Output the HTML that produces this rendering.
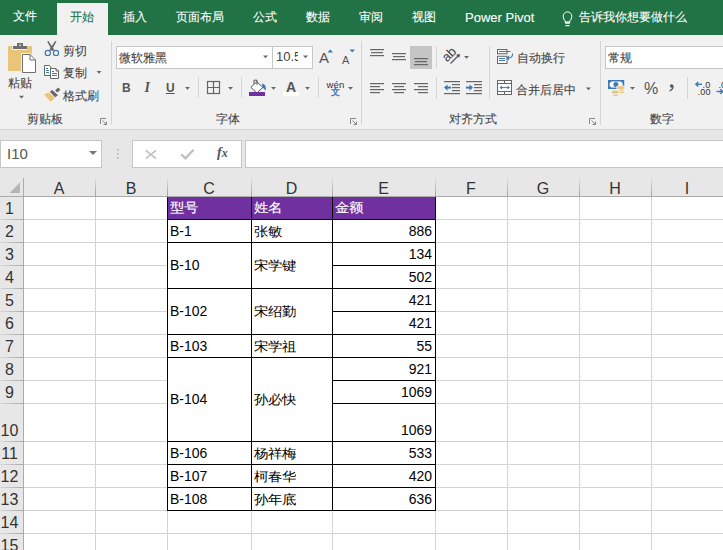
<!DOCTYPE html><html><head><meta charset="utf-8"><style>
*{box-sizing:border-box;margin:0;padding:0}
html,body{width:723px;height:550px;overflow:hidden;background:#e7e7e7}
body{position:relative;font-family:"Liberation Sans",sans-serif;color:#444}
div{position:absolute;white-space:nowrap}
.tab{top:10px;font-size:12px;line-height:15px;color:#fff;-webkit-text-stroke:0.1px currentColor}
.t{font-size:12px;line-height:15px;color:#444;-webkit-text-stroke:0.1px #444}
.sep{width:1px;background:#d5d5d5}
.box{background:#fff;border:1px solid #c6c6c6}
.dd{width:0;height:0;border-left:3px solid transparent;border-right:3px solid transparent;border-top:3px solid #666}
.gl{background:#d4d4d4}
.bk{background:#000}
.ch{top:181px;height:19px;font-size:16px;line-height:19px;text-align:center;color:#333}
.rh{left:-4px;width:27px;font-size:16px;text-align:center;color:#333}
.c{font-size:14px;line-height:16px;color:#000}
svg{position:absolute;overflow:visible}
</style></head><body>
<div style="left:0px;top:0px;width:723px;height:35px;background:#217346"></div>
<div style="left:57px;top:3px;width:51px;height:33px;background:#f1f1f1"></div>
<div class="tab" style="left:13px;top:9px;">文件</div>
<div class="tab" style="left:70px;top:10px;color:#217346">开始</div>
<div class="tab" style="left:123px;top:10px;">插入</div>
<div class="tab" style="left:176px;top:10px;">页面布局</div>
<div class="tab" style="left:253px;top:10px;">公式</div>
<div class="tab" style="left:306px;top:10px;">数据</div>
<div class="tab" style="left:359px;top:10px;">审阅</div>
<div class="tab" style="left:412px;top:10px;">视图</div>
<div class="tab" style="left:465px;top:10px;font-size:13px">Power Pivot</div>
<div class="tab" style="left:579px;top:10px;">告诉我你想要做什么</div>
<div style="left:0px;top:35px;width:723px;height:94px;background:#f1f1f1"></div>
<div style="left:0px;top:129px;width:723px;height:1px;background:#d5d5d5"></div>
<svg width="723" height="550" style="left:0;top:0;z-index:5"><rect x="111" y="41" width="1" height="84" fill="#d5d5d5"/><rect x="361" y="41" width="1" height="84" fill="#d5d5d5"/><rect x="600" y="41" width="1" height="84" fill="#d5d5d5"/><rect x="198" y="77" width="1" height="21" fill="#d5d5d5"/><rect x="241" y="77" width="1" height="21" fill="#d5d5d5"/><rect x="318" y="77" width="1" height="21" fill="#d5d5d5"/><rect x="436" y="46" width="1" height="22" fill="#d5d5d5"/><rect x="436" y="77" width="1" height="22" fill="#d5d5d5"/><rect x="489" y="46" width="1" height="53" fill="#d5d5d5"/><rect x="687" y="77" width="1" height="22" fill="#d5d5d5"/><rect x="8" y="46" width="24" height="25" rx="1" fill="#e9c57a"/><rect x="12" y="46" width="15" height="4" fill="#f1f1f1"/><rect x="13" y="46" width="14" height="3" fill="#6d6d6d"/><rect x="17" y="43" width="6" height="4" fill="#6d6d6d"/><rect x="19.5" y="44.5" width="1.5" height="1.5" fill="#f1f1f1"/><path d="M21 53 H30.5 L37 59.5 V73 H21 Z" fill="#f1f1f1"/><path d="M22.5 54.5 H30 L35.5 60 V72.5 H22.5 Z" fill="#fff" stroke="#6f6f6f" stroke-width="1"/><path d="M30 54.5 V60 H35.5" fill="none" stroke="#6f6f6f" stroke-width="1"/><polygon points="47.2,41.6 48.5,41.1 54.4,50.1 52.3,50.9" fill="#666"/><polygon points="56.4,41.6 55.1,41.1 49.2,50.1 51.3,50.9" fill="#666"/><circle cx="47.8" cy="52.9" r="2.6" fill="none" stroke="#3c78b4" stroke-width="1.15"/><circle cx="56" cy="52.9" r="2.6" fill="none" stroke="#3c78b4" stroke-width="1.15"/><path d="M44.5 65.5 H49.5 L51 67 V68.5 H50.5 V75.5 H44.5 Z" fill="#fff" stroke="#666" stroke-width="1"/><path d="M50.5 68.5 H56 L58.5 71 V78.5 H50.5 Z" fill="#fff" stroke="#666" stroke-width="1"/><path d="M56 68.5 V71 H58.5" fill="none" stroke="#666" stroke-width="1"/><rect x="46" y="68.0" width="2" height="1" fill="#3c78b4"/><rect x="46" y="70.0" width="3" height="1" fill="#3c78b4"/><rect x="46" y="72.0" width="3" height="1" fill="#3c78b4"/><rect x="52" y="71.0" width="2" height="1" fill="#3c78b4"/><rect x="52" y="73.0" width="5" height="1" fill="#3c78b4"/><rect x="52" y="75.0" width="5" height="1" fill="#3c78b4"/><polygon points="55.2,90.4 58.2,87.6 60.4,89.8 57.4,92.6" fill="#666"/><polygon points="52.2,90.1 49.8,91.8 55.2,97.2 58,95.2" fill="#666"/><polygon points="44,94.6 48.6,92.6 55,97.8 50.8,101.8" fill="#e9c57a"/><polygon points="19,95.8 24,95.8 21.5,98.6" fill="#666"/><polygon points="96.5,71 101.5,71 99.0,73.8" fill="#666"/><polygon points="263,55.5 268,55.5 265.5,58.3" fill="#666"/><polygon points="303,55.5 308,55.5 305.5,58.3" fill="#666"/><polygon points="185,87 190,87 187.5,89.8" fill="#666"/><polygon points="228,87 233,87 230.5,89.8" fill="#666"/><polygon points="271,87 276,87 273.5,89.8" fill="#666"/><polygon points="305,87 310,87 307.5,89.8" fill="#666"/><polygon points="348,87 353,87 350.5,89.8" fill="#666"/><polygon points="464,56 469,56 466.5,58.8" fill="#666"/><polygon points="586,87.5 591,87.5 588.5,90.3" fill="#666"/><polygon points="630,87 635,87 632.5,89.8" fill="#666"/><polygon points="327.5,52.5 333,52.5 330.25,49.5" fill="#3c78b4"/><polygon points="349.5,49.5 355,49.5 352.25,52.5" fill="#3c78b4"/><path d="M256.8 81.7 L262.9 87.4 L256.8 93 L250.9 87.4 Z" fill="#fff" stroke="#555" stroke-width="1"/><path d="M254 84 V80.2 H257 V85" fill="none" stroke="#555" stroke-width="1"/><path d="M262 83.6 Q266.8 84.6 265.6 90.8 Q264.2 89.2 262.6 87.6 Z" fill="#3c78b4"/><rect x="249" y="92" width="16" height="4" fill="#7030a0"/><rect x="283" y="92" width="16" height="4" fill="#fff"/><rect x="207.5" y="81.5" width="12" height="12" fill="none" stroke="#666" stroke-width="1.2"/><path d="M213.5 81.5 V93.5 M207.5 87.5 H219.5" stroke="#666" stroke-width="1.2"/><rect x="410" y="46" width="22" height="23" fill="#c5c5c5"/><rect x="370" y="49" width="14" height="1.2" fill="#666"/><rect x="370" y="55" width="14" height="1.2" fill="#666"/><rect x="392" y="53" width="14" height="1.2" fill="#666"/><rect x="392" y="59" width="14" height="1.2" fill="#666"/><rect x="414" y="58" width="14" height="1.2" fill="#666"/><rect x="414" y="64" width="14" height="1.2" fill="#666"/><rect x="371" y="52" width="12" height="1.2" fill="#666"/><rect x="393" y="56" width="12" height="1.2" fill="#666"/><rect x="415" y="61" width="12" height="1.2" fill="#666"/><rect x="370" y="83" width="14" height="1.2" fill="#666"/><rect x="392" y="83" width="14" height="1.2" fill="#666"/><rect x="414" y="83" width="14" height="1.2" fill="#666"/><rect x="370" y="86" width="10" height="1.2" fill="#666"/><rect x="394" y="86" width="10" height="1.2" fill="#666"/><rect x="418" y="86" width="10" height="1.2" fill="#666"/><rect x="370" y="89" width="14" height="1.2" fill="#666"/><rect x="392" y="89" width="14" height="1.2" fill="#666"/><rect x="414" y="89" width="14" height="1.2" fill="#666"/><rect x="370" y="92" width="10" height="1.2" fill="#666"/><rect x="394" y="92" width="10" height="1.2" fill="#666"/><rect x="418" y="92" width="10" height="1.2" fill="#666"/><text x="0" y="0" transform="translate(452 57.5) rotate(-45)" font-family="Liberation Sans" font-size="13" fill="#444" text-anchor="middle">ab</text><path d="M450.5 63.5 L459 55" stroke="#555" stroke-width="1.2"/><polygon points="460,54 456,54.8 459.2,58" fill="#555"/><rect x="444" y="81" width="16" height="1.2" fill="#666"/><rect x="444" y="93" width="16" height="1.2" fill="#666"/><rect x="452" y="84" width="8" height="1.2" fill="#666"/><rect x="452" y="87" width="8" height="1.2" fill="#666"/><rect x="452" y="90" width="8" height="1.2" fill="#666"/><path d="M451 87.6 H445.5" stroke="#3c78b4" stroke-width="2"/><polygon points="444,87.6 447.5,84.5 447.5,90.7" fill="#3c78b4"/><rect x="466" y="81" width="16" height="1.2" fill="#666"/><rect x="466" y="93" width="16" height="1.2" fill="#666"/><rect x="474" y="84" width="8" height="1.2" fill="#666"/><rect x="474" y="87" width="8" height="1.2" fill="#666"/><rect x="474" y="90" width="8" height="1.2" fill="#666"/><path d="M466 87.6 H471.5" stroke="#3c78b4" stroke-width="2"/><polygon points="473,87.6 469.5,84.5 469.5,90.7" fill="#3c78b4"/><rect x="497.5" y="49.5" width="9.5" height="4.2" fill="#fff" stroke="#666" stroke-width="1"/><rect x="497.5" y="56.3" width="9.5" height="7.2" fill="#fff" stroke="#666" stroke-width="1"/><path d="M499 51.5 H510.5" stroke="#3c78b4" stroke-width="1"/><path d="M499 58.5 H505 M499 60.5 H505" stroke="#3c78b4" stroke-width="1"/><path d="M512.5 53.5 Q513 58 507.5 58" fill="none" stroke="#3c78b4" stroke-width="1.1"/><polygon points="506.3,58 509,55.6 509,60.4" fill="#3c78b4"/><rect x="497.5" y="80.5" width="14" height="14" fill="#fff" stroke="#666" stroke-width="1"/><path d="M497.5 83.5 H511.5 M497.5 91.5 H511.5 M504.5 80.5 V83.5 M504.5 91.5 V94.5" stroke="#666" stroke-width="1"/><path d="M500.5 87.6 H508.5" stroke="#3c78b4" stroke-width="1"/><polygon points="499.5,87.6 502,85.8 502,89.4" fill="#3c78b4"/><polygon points="510,87.6 507.5,85.8 507.5,89.4" fill="#3c78b4"/><path d="M100.5 124 V118.5 H106" fill="none" stroke="#888" stroke-width="1"/><path d="M102.5 120.5 L106.5 124.5 M106.5 121.5 V124.5 H103.5" fill="none" stroke="#888" stroke-width="1"/><path d="M350.5 124 V118.5 H356" fill="none" stroke="#888" stroke-width="1"/><path d="M352.5 120.5 L356.5 124.5 M356.5 121.5 V124.5 H353.5" fill="none" stroke="#888" stroke-width="1"/><path d="M589.5 124 V118.5 H595" fill="none" stroke="#888" stroke-width="1"/><path d="M591.5 120.5 L595.5 124.5 M595.5 121.5 V124.5 H592.5" fill="none" stroke="#888" stroke-width="1"/><rect x="608" y="80" width="16.2" height="9" fill="#3c78b4"/><path d="M611 81.6 H621.2 Q621.2 83 622.6 83 V86.2 Q621.2 86.2 621.2 87.5 H611 Q611 86.2 609.6 86.2 V83 Q611 83 611 81.6 Z" fill="#fff"/><circle cx="615.9" cy="84.5" r="2.5" fill="#3c78b4"/><ellipse cx="620.6" cy="87.5" rx="4.5" ry="2.2" fill="#f1f1f1"/><rect x="618.6" y="89.0" width="5.8" height="2.4" fill="#f1f1f1"/><rect x="619.2" y="89.6" width="4.6" height="1.2" rx="0.5" fill="#e9c57a"/><rect x="618.6" y="91.2" width="5.8" height="2.4" fill="#f1f1f1"/><rect x="619.2" y="91.8" width="4.6" height="1.2" rx="0.5" fill="#e9c57a"/><ellipse cx="620.6" cy="87.5" rx="3.7" ry="1.5" fill="#e9c57a"/><ellipse cx="615.3" cy="92.1" rx="4.3" ry="2.2" fill="#f1f1f1"/><rect x="612.4" y="94.10000000000001" width="6.1000000000000005" height="2.4" fill="#f1f1f1"/><rect x="613" y="94.7" width="4.9" height="1.2" rx="0.5" fill="#e9c57a"/><ellipse cx="615.3" cy="92.1" rx="3.5" ry="1.5" fill="#e9c57a"/><circle cx="671.6" cy="86" r="1.7" fill="#555"/><path d="M673.1 86.2 Q673.3 89.2 669.6 90.8" fill="none" stroke="#555" stroke-width="1.3"/><path d="M696.5 84.3 H702" stroke="#3c78b4" stroke-width="1.4"/><path d="M698.3 82 L695.8 84.3 L698.3 86.6" fill="none" stroke="#3c78b4" stroke-width="1.4"/><path d="M716.5 91.5 H722" stroke="#3c78b4" stroke-width="1.4"/><path d="M720.2 89.2 L722.7 91.5 L720.2 93.8" fill="none" stroke="#3c78b4" stroke-width="1.4"/><path d="M565.3 23 V21 Q563.2 19.5 563.2 16.2 A4.3 4.3 0 1 1 571.8 16.2 Q571.8 19.5 569.7 21 V23 Z" fill="none" stroke="#fff" stroke-width="1"/><rect x="565.3" y="21.5" width="4.4" height="2" fill="#fff"/><rect x="565.5" y="25" width="4" height="1.2" fill="#fff"/><path d="M145.8 150.3 L156 158.7 M156 150.3 L145.8 158.7" stroke="#c0c0c0" stroke-width="1.7"/><path d="M181.2 154.3 L185.5 158.4 L193.5 149.8" fill="none" stroke="#c0c0c0" stroke-width="2.3"/><rect x="117" y="149" width="1.5" height="1.5" fill="#aaa"/><rect x="117" y="153" width="1.5" height="1.5" fill="#aaa"/><rect x="117" y="157" width="1.5" height="1.5" fill="#aaa"/></svg>
<div class="t" style="left:63px;top:44px;z-index:6">剪切</div>
<div class="t" style="left:63px;top:66px;z-index:6">复制</div>
<div class="t" style="left:63px;top:89px;z-index:6">格式刷</div>
<div class="t" style="left:8px;top:76px;z-index:6">粘贴</div>
<div class="t" style="left:27px;top:112px;z-index:6">剪贴板</div>
<div class="t" style="left:216px;top:112px;z-index:6">字体</div>
<div class="t" style="left:449px;top:112px;z-index:6">对齐方式</div>
<div class="t" style="left:517px;top:51px;z-index:6">自动换行</div>
<div class="t" style="left:516px;top:83px;z-index:6">合并后居中</div>
<div class="t" style="left:650px;top:112px;z-index:6">数字</div>
<div class="box" style="left:116px;top:46px;width:157px;height:23px;"></div>
<div class="box" style="left:272px;top:46px;width:41px;height:23px;"></div>
<div class="box" style="left:605px;top:46px;width:130px;height:23px;"></div>
<div class="t" style="left:119px;top:51px;">微软雅黑</div>
<div style="left:276px;top:48px;width:22px;height:18px;overflow:hidden;font-size:13px;line-height:18px;color:#444">10.5</div>
<div class="t" style="left:608px;top:51px;">常规</div>
<div style="left:319px;top:50px;font-size:15px;line-height:16px;color:#555">A</div>
<div style="left:342px;top:54px;font-size:11px;line-height:12px;color:#555">A</div>
<div style="left:122px;top:82px;font-size:12px;line-height:13px;font-weight:bold;color:#555">B</div>
<div style="left:144.5px;top:81px;font-size:14px;line-height:13px;font-style:italic;font-weight:bold;font-family:'Liberation Serif',serif;color:#555">I</div>
<div style="left:166px;top:82px;font-size:12px;line-height:13px;font-weight:bold;color:#555;text-decoration:underline">U</div>
<div style="left:286px;top:80px;font-size:14px;line-height:14px;font-weight:bold;color:#555">A</div>
<div style="left:326.5px;top:80px;font-size:9.5px;line-height:10px;color:#333;letter-spacing:0.2px">wén</div>
<div style="left:331px;top:87px;font-size:9px;line-height:10px;color:#3c78b4;font-weight:bold">文</div>
<div style="left:644px;top:81px;font-size:16px;line-height:16px;color:#555">%</div>
<div style="left:702.5px;top:80.5px;font-size:9px;line-height:8px;color:#333;letter-spacing:0.3px">.0</div>
<div style="left:697.5px;top:87.5px;font-size:9px;line-height:8px;color:#333;letter-spacing:0.3px">.00</div>
<div style="left:718.5px;top:80.5px;font-size:9px;line-height:8px;color:#333">.0</div>
<div style="left:217px;top:146px;z-index:7;font-family:'Liberation Serif',serif;font-style:italic;font-weight:bold;font-size:14px;line-height:14px;color:#555">f<span style="font-size:12px">x</span></div>
<div class="box" style="left:0px;top:140px;width:102px;height:28px;"></div>
<div style="left:7px;top:145px;font-size:15px;line-height:18px;color:#555">I10</div>
<div class="dd" style="left:89px;top:151px;border-left-width:4px;border-right-width:4px;border-top-width:4px;border-top-color:#777"></div>
<div class="box" style="left:132px;top:140px;width:110px;height:28px;"></div>
<div class="box" style="left:245px;top:140px;width:500px;height:28px;"></div>
<div style="left:24px;top:197px;width:699px;height:353px;background:#fff"></div>
<div style="left:0px;top:196px;width:723px;height:1px;background:#ababab"></div>
<div style="left:23px;top:178px;width:1px;height:372px;background:#ababab"></div>
<div style="left:95px;top:178px;width:1px;height:18px;background:linear-gradient(#e0e0e0,#a0a0a0)"></div>
<div style="left:167px;top:178px;width:1px;height:18px;background:linear-gradient(#e0e0e0,#a0a0a0)"></div>
<div style="left:251px;top:178px;width:1px;height:18px;background:linear-gradient(#e0e0e0,#a0a0a0)"></div>
<div style="left:332px;top:178px;width:1px;height:18px;background:linear-gradient(#e0e0e0,#a0a0a0)"></div>
<div style="left:435px;top:178px;width:1px;height:18px;background:linear-gradient(#e0e0e0,#a0a0a0)"></div>
<div style="left:507px;top:178px;width:1px;height:18px;background:linear-gradient(#e0e0e0,#a0a0a0)"></div>
<div style="left:579px;top:178px;width:1px;height:18px;background:linear-gradient(#e0e0e0,#a0a0a0)"></div>
<div style="left:651px;top:178px;width:1px;height:18px;background:linear-gradient(#e0e0e0,#a0a0a0)"></div>
<svg width="723" height="550" style="left:0;top:0"><polygon points="20,182.5 20,193 9.5,193" fill="#b5b5b5"/></svg>
<div class="gl" style="left:24px;top:219px;width:699px;height:1px;"></div>
<div class="gl" style="left:24px;top:242px;width:699px;height:1px;"></div>
<div class="gl" style="left:24px;top:265px;width:699px;height:1px;"></div>
<div class="gl" style="left:24px;top:288px;width:699px;height:1px;"></div>
<div class="gl" style="left:24px;top:311px;width:699px;height:1px;"></div>
<div class="gl" style="left:24px;top:334px;width:699px;height:1px;"></div>
<div class="gl" style="left:24px;top:357px;width:699px;height:1px;"></div>
<div class="gl" style="left:24px;top:380px;width:699px;height:1px;"></div>
<div class="gl" style="left:24px;top:403px;width:699px;height:1px;"></div>
<div class="gl" style="left:24px;top:441px;width:699px;height:1px;"></div>
<div class="gl" style="left:24px;top:464px;width:699px;height:1px;"></div>
<div class="gl" style="left:24px;top:487px;width:699px;height:1px;"></div>
<div class="gl" style="left:24px;top:510px;width:699px;height:1px;"></div>
<div class="gl" style="left:24px;top:533px;width:699px;height:1px;"></div>
<div class="gl" style="left:24px;top:556px;width:699px;height:1px;"></div>
<div class="gl" style="left:95px;top:197px;width:1px;height:353px;"></div>
<div class="gl" style="left:167px;top:197px;width:1px;height:353px;"></div>
<div class="gl" style="left:251px;top:197px;width:1px;height:353px;"></div>
<div class="gl" style="left:332px;top:197px;width:1px;height:353px;"></div>
<div class="gl" style="left:435px;top:197px;width:1px;height:353px;"></div>
<div class="gl" style="left:507px;top:197px;width:1px;height:353px;"></div>
<div class="gl" style="left:579px;top:197px;width:1px;height:353px;"></div>
<div class="gl" style="left:651px;top:197px;width:1px;height:353px;"></div>
<div style="left:0px;top:219px;width:23px;height:1px;background:linear-gradient(to right,#d8d8d8,#a8a8a8)"></div>
<div style="left:0px;top:242px;width:23px;height:1px;background:linear-gradient(to right,#d8d8d8,#a8a8a8)"></div>
<div style="left:0px;top:265px;width:23px;height:1px;background:linear-gradient(to right,#d8d8d8,#a8a8a8)"></div>
<div style="left:0px;top:288px;width:23px;height:1px;background:linear-gradient(to right,#d8d8d8,#a8a8a8)"></div>
<div style="left:0px;top:311px;width:23px;height:1px;background:linear-gradient(to right,#d8d8d8,#a8a8a8)"></div>
<div style="left:0px;top:334px;width:23px;height:1px;background:linear-gradient(to right,#d8d8d8,#a8a8a8)"></div>
<div style="left:0px;top:357px;width:23px;height:1px;background:linear-gradient(to right,#d8d8d8,#a8a8a8)"></div>
<div style="left:0px;top:380px;width:23px;height:1px;background:linear-gradient(to right,#d8d8d8,#a8a8a8)"></div>
<div style="left:0px;top:403px;width:23px;height:1px;background:linear-gradient(to right,#d8d8d8,#a8a8a8)"></div>
<div style="left:0px;top:441px;width:23px;height:1px;background:linear-gradient(to right,#d8d8d8,#a8a8a8)"></div>
<div style="left:0px;top:464px;width:23px;height:1px;background:linear-gradient(to right,#d8d8d8,#a8a8a8)"></div>
<div style="left:0px;top:487px;width:23px;height:1px;background:linear-gradient(to right,#d8d8d8,#a8a8a8)"></div>
<div style="left:0px;top:510px;width:23px;height:1px;background:linear-gradient(to right,#d8d8d8,#a8a8a8)"></div>
<div style="left:0px;top:533px;width:23px;height:1px;background:linear-gradient(to right,#d8d8d8,#a8a8a8)"></div>
<div style="left:0px;top:556px;width:23px;height:1px;background:linear-gradient(to right,#d8d8d8,#a8a8a8)"></div>
<div class="ch" style="left:23px;top:179px;width:72px;height:19px;">A</div>
<div class="ch" style="left:95px;top:179px;width:72px;height:19px;">B</div>
<div class="ch" style="left:167px;top:179px;width:84px;height:19px;">C</div>
<div class="ch" style="left:251px;top:179px;width:81px;height:19px;">D</div>
<div class="ch" style="left:332px;top:179px;width:103px;height:19px;">E</div>
<div class="ch" style="left:435px;top:179px;width:72px;height:19px;">F</div>
<div class="ch" style="left:507px;top:179px;width:72px;height:19px;">G</div>
<div class="ch" style="left:579px;top:179px;width:72px;height:19px;">H</div>
<div class="ch" style="left:651px;top:179px;width:72px;height:19px;">I</div>
<div class="rh" style="left:-4px;top:199px;width:27px;height:19px;line-height:19px">1</div>
<div class="rh" style="left:-4px;top:222px;width:27px;height:19px;line-height:19px">2</div>
<div class="rh" style="left:-4px;top:245px;width:27px;height:19px;line-height:19px">3</div>
<div class="rh" style="left:-4px;top:268px;width:27px;height:19px;line-height:19px">4</div>
<div class="rh" style="left:-4px;top:291px;width:27px;height:19px;line-height:19px">5</div>
<div class="rh" style="left:-4px;top:314px;width:27px;height:19px;line-height:19px">6</div>
<div class="rh" style="left:-4px;top:337px;width:27px;height:19px;line-height:19px">7</div>
<div class="rh" style="left:-4px;top:360px;width:27px;height:19px;line-height:19px">8</div>
<div class="rh" style="left:-4px;top:383px;width:27px;height:19px;line-height:19px">9</div>
<div class="rh" style="left:-4px;top:421px;width:27px;height:19px;line-height:19px">10</div>
<div class="rh" style="left:-4px;top:444px;width:27px;height:19px;line-height:19px">11</div>
<div class="rh" style="left:-4px;top:467px;width:27px;height:19px;line-height:19px">12</div>
<div class="rh" style="left:-4px;top:490px;width:27px;height:19px;line-height:19px">13</div>
<div class="rh" style="left:-4px;top:513px;width:27px;height:19px;line-height:19px">14</div>
<div class="rh" style="left:-4px;top:536px;width:27px;height:19px;line-height:19px">15</div>
<div style="left:168px;top:197px;width:267px;height:22px;background:#7030a0"></div>
<div style="left:168px;top:243px;width:83px;height:45px;background:#fff"></div>
<div style="left:168px;top:289px;width:83px;height:45px;background:#fff"></div>
<div style="left:168px;top:358px;width:83px;height:83px;background:#fff"></div>
<div style="left:252px;top:243px;width:80px;height:45px;background:#fff"></div>
<div style="left:252px;top:289px;width:80px;height:45px;background:#fff"></div>
<div style="left:252px;top:358px;width:80px;height:83px;background:#fff"></div>
<div class="bk" style="left:167px;top:219px;width:269px;height:1px;"></div>
<div class="bk" style="left:167px;top:242px;width:269px;height:1px;"></div>
<div class="bk" style="left:167px;top:288px;width:269px;height:1px;"></div>
<div class="bk" style="left:167px;top:334px;width:269px;height:1px;"></div>
<div class="bk" style="left:167px;top:357px;width:269px;height:1px;"></div>
<div class="bk" style="left:167px;top:441px;width:269px;height:1px;"></div>
<div class="bk" style="left:167px;top:464px;width:269px;height:1px;"></div>
<div class="bk" style="left:167px;top:487px;width:269px;height:1px;"></div>
<div class="bk" style="left:167px;top:510px;width:269px;height:1px;"></div>
<div class="bk" style="left:332px;top:265px;width:104px;height:1px;"></div>
<div class="bk" style="left:332px;top:311px;width:104px;height:1px;"></div>
<div class="bk" style="left:332px;top:380px;width:104px;height:1px;"></div>
<div class="bk" style="left:332px;top:403px;width:104px;height:1px;"></div>
<div class="bk" style="left:167px;top:197px;width:1px;height:314px;"></div>
<div class="bk" style="left:251px;top:197px;width:1px;height:314px;"></div>
<div class="bk" style="left:332px;top:197px;width:1px;height:314px;"></div>
<div class="bk" style="left:435px;top:197px;width:1px;height:314px;"></div>
<div class="c" style="left:170px;top:199px;color:#fff;-webkit-text-stroke:0.15px #fff;transform-origin:0 55%;transform:scaleY(0.9);">型号</div>
<div class="c" style="left:254px;top:199px;color:#fff;-webkit-text-stroke:0.15px #fff;transform-origin:0 55%;transform:scaleY(0.9);">姓名</div>
<div class="c" style="left:335px;top:199px;color:#fff;-webkit-text-stroke:0.15px #fff;transform-origin:0 55%;transform:scaleY(0.9);">金额</div>
<div class="c" style="left:170px;top:222.5px;color:#000;transform-origin:0 0;font-size:15.5px;letter-spacing:0px;transform:scaleX(0.9)">B-1</div>
<div class="c" style="left:254px;top:223px;color:#000;transform-origin:0 55%;transform:scaleY(0.9);">张敏</div>
<div class="c" style="left:170px;top:256.5px;color:#000;transform-origin:0 0;font-size:15.5px;letter-spacing:0px;transform:scaleX(0.9)">B-10</div>
<div class="c" style="left:254px;top:257px;color:#000;transform-origin:0 55%;transform:scaleY(0.9);">宋学键</div>
<div class="c" style="left:170px;top:302.5px;color:#000;transform-origin:0 0;font-size:15.5px;letter-spacing:0px;transform:scaleX(0.9)">B-102</div>
<div class="c" style="left:254px;top:303px;color:#000;transform-origin:0 55%;transform:scaleY(0.9);">宋绍勤</div>
<div class="c" style="left:170px;top:337.5px;color:#000;transform-origin:0 0;font-size:15.5px;letter-spacing:0px;transform:scaleX(0.9)">B-103</div>
<div class="c" style="left:254px;top:338px;color:#000;transform-origin:0 55%;transform:scaleY(0.9);">宋学祖</div>
<div class="c" style="left:170px;top:390.5px;color:#000;transform-origin:0 0;font-size:15.5px;letter-spacing:0px;transform:scaleX(0.9)">B-104</div>
<div class="c" style="left:254px;top:391px;color:#000;transform-origin:0 55%;transform:scaleY(0.9);">孙必快</div>
<div class="c" style="left:170px;top:444.5px;color:#000;transform-origin:0 0;font-size:15.5px;letter-spacing:0px;transform:scaleX(0.9)">B-106</div>
<div class="c" style="left:254px;top:445px;color:#000;transform-origin:0 55%;transform:scaleY(0.9);">杨祥梅</div>
<div class="c" style="left:170px;top:467.5px;color:#000;transform-origin:0 0;font-size:15.5px;letter-spacing:0px;transform:scaleX(0.9)">B-107</div>
<div class="c" style="left:254px;top:468px;color:#000;transform-origin:0 55%;transform:scaleY(0.9);">柯春华</div>
<div class="c" style="left:170px;top:490.5px;color:#000;transform-origin:0 0;font-size:15.5px;letter-spacing:0px;transform:scaleX(0.9)">B-108</div>
<div class="c" style="left:254px;top:491px;color:#000;transform-origin:0 55%;transform:scaleY(0.9);">孙年底</div>
<div class="c" style="left:332px;top:222.5px;width:100px;text-align:right;color:#000;transform-origin:100% 0;font-size:15.5px;letter-spacing:0px;transform:scaleX(0.9)">886</div>
<div class="c" style="left:332px;top:245.5px;width:100px;text-align:right;color:#000;transform-origin:100% 0;font-size:15.5px;letter-spacing:0px;transform:scaleX(0.9)">134</div>
<div class="c" style="left:332px;top:268.5px;width:100px;text-align:right;color:#000;transform-origin:100% 0;font-size:15.5px;letter-spacing:0px;transform:scaleX(0.9)">502</div>
<div class="c" style="left:332px;top:291.5px;width:100px;text-align:right;color:#000;transform-origin:100% 0;font-size:15.5px;letter-spacing:0px;transform:scaleX(0.9)">421</div>
<div class="c" style="left:332px;top:314.5px;width:100px;text-align:right;color:#000;transform-origin:100% 0;font-size:15.5px;letter-spacing:0px;transform:scaleX(0.9)">421</div>
<div class="c" style="left:332px;top:337.5px;width:100px;text-align:right;color:#000;transform-origin:100% 0;font-size:15.5px;letter-spacing:0px;transform:scaleX(0.9)">55</div>
<div class="c" style="left:332px;top:360.5px;width:100px;text-align:right;color:#000;transform-origin:100% 0;font-size:15.5px;letter-spacing:0px;transform:scaleX(0.9)">921</div>
<div class="c" style="left:332px;top:383.5px;width:100px;text-align:right;color:#000;transform-origin:100% 0;font-size:15.5px;letter-spacing:0px;transform:scaleX(0.9)">1069</div>
<div class="c" style="left:332px;top:421.5px;width:100px;text-align:right;color:#000;transform-origin:100% 0;font-size:15.5px;letter-spacing:0px;transform:scaleX(0.9)">1069</div>
<div class="c" style="left:332px;top:444.5px;width:100px;text-align:right;color:#000;transform-origin:100% 0;font-size:15.5px;letter-spacing:0px;transform:scaleX(0.9)">533</div>
<div class="c" style="left:332px;top:467.5px;width:100px;text-align:right;color:#000;transform-origin:100% 0;font-size:15.5px;letter-spacing:0px;transform:scaleX(0.9)">420</div>
<div class="c" style="left:332px;top:490.5px;width:100px;text-align:right;color:#000;transform-origin:100% 0;font-size:15.5px;letter-spacing:0px;transform:scaleX(0.9)">636</div>
</body></html>
